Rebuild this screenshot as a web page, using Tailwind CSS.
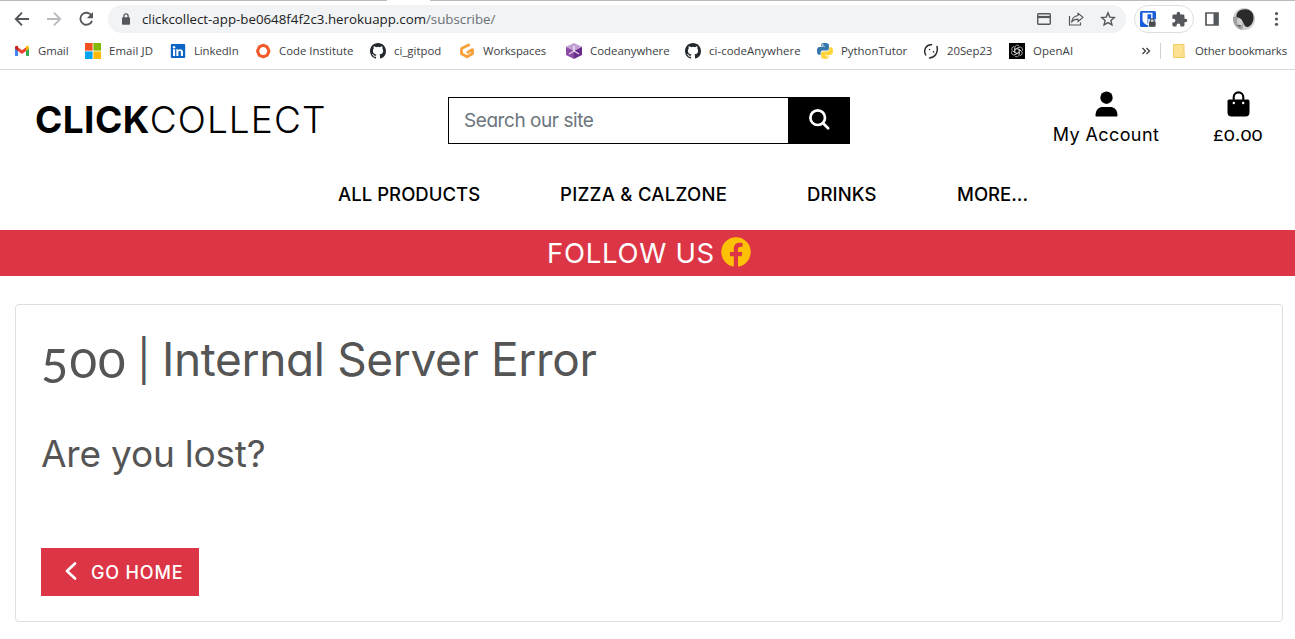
<!DOCTYPE html>
<html lang="en">
<head>
<meta charset="utf-8">
<title>ClickCollect</title>
<script src="https://cdn.jsdelivr.net/npm/@tailwindcss/browser@4"></script>
</head>
<body class="h-[639px] overflow-hidden bg-white font-['Inter',sans-serif] [font-feature-settings:'cv11'] text-black">

<!-- Browser toolbar -->
<div class="h-[70px] border-b border-[#d6d7d9] font-['Open_Sans',sans-serif]">
  <div class="flex h-px">
    <div class="w-[387px] bg-[#b9babc]"></div><div class="w-[43px]"></div><div class="flex-1 bg-[#b9babc]"></div>
  </div>
  <div class="mt-1 flex h-7 items-center">
    <svg class="ml-[14px] h-4 w-4" viewBox="0 0 16 16" fill="none" stroke="#54585c" stroke-width="1.9"><path d="M15 8H2M8 1.7 1.8 8 8 14.3"/></svg>
    <svg class="ml-4 h-4 w-4" viewBox="0 0 16 16" fill="none" stroke="#b9bbbe" stroke-width="1.9"><path d="M1 8h13M8 1.7 14.2 8 8 14.3"/></svg>
    <svg class="ml-4 h-4 w-4" viewBox="0 0 16 16"><path d="M13.6 4.8A6 6 0 1 0 14 9.8" fill="none" stroke="#54585c" stroke-width="1.9"/><path d="M15 1v6.2H8.8z" fill="#54585c"/></svg>
    <div class="ml-[14px] flex h-7 w-[1018px] items-center rounded-full bg-[#f1f3f4]">
      <svg class="ml-[13px] h-3 w-[10px]" viewBox="0 0 10 12"><rect x="1" y="4.3" width="8" height="7.4" rx="1" fill="#54585c"/><path d="M2.9 5V3a2.1 2.1 0 0 1 4.2 0v2" fill="none" stroke="#54585c" stroke-width="1.3"/></svg>
      <span class="mt-px ml-[11px] w-[895px] text-[13.3px] whitespace-nowrap text-[#202124]">clickcollect-app-be0648f4f2c3.herokuapp.com<span class="text-[#6b6f74]">/subscribe/</span></span>
      <svg class="h-[14px] w-[14px]" viewBox="0 0 14 14" fill="none" stroke="#54585c" stroke-width="1.4"><rect x=".7" y="1.7" width="12.6" height="10.6" rx="1"/><path d="M.7 5h12.6" stroke-width="2.2"/></svg>
      <svg class="ml-[17px] h-4 w-4" viewBox="0 0 16 16" fill="none" stroke="#54585c" stroke-width="1.2" stroke-linejoin="round"><path d="M1.5 5v9h11v-2.500"/><path d="M10 2.2 15 6.400l-5 4.100V8.200C7 8.200 5 9.200 3.600 11.200 4 8 6 5 10 4.500z"/></svg>
      <svg class="ml-4 h-4 w-4" viewBox="0 0 16 16" fill="none" stroke="#54585c" stroke-width="1.4" stroke-linejoin="miter"><path d="m8 1.900 1.800 4.200 4.500.4-3.400 3 1 4.400L8 11.600l-3.900 2.300 1-4.400-3.400-3 4.500-.4z"/></svg>
    </div>
    <div class="ml-2 flex h-7 w-[60px] items-center rounded-full border border-[#dcdee1]">
      <svg class="ml-[5px] h-4 w-4" viewBox="0 0 16 16"><rect width="16" height="16" rx="1.500" fill="#175ddc"/><path d="M2.500 1.800h10v6.700c0 3-2.500 4.500-5 5.700-2.500-1.200-5-2.700-5-5.700z" fill="#fff"/><path d="M7.500 3.200h3.700v5.300c0 2-1.700 3.200-3.700 4.300z" fill="#175ddc"/><path d="M8 8h8v8H8z" fill="#fff" opacity=".75"/><rect x="9" y="10.700" width="6.500" height="5" rx=".8" fill="#4b4b4b"/><path d="M10.500 11V9.700a1.800 1.800 0 0 1 3.600 0V11" fill="none" stroke="#4b4b4b" stroke-width="1.200"/></svg>
      <svg class="ml-[15px] h-[17px] w-[17px]" viewBox="0 0 24 24" fill="#54585c"><path d="M20.500 11H19V7a2 2 0 0 0-2-2h-4V3.500a2.500 2.500 0 0 0-5 0V5H4a2 2 0 0 0-2 2v3.800h1.500a2.700 2.700 0 0 1 0 5.400H2V20a2 2 0 0 0 2 2h3.800v-1.500a2.700 2.700 0 0 1 5.400 0V22H17a2 2 0 0 0 2-2v-4h1.500a2.500 2.500 0 0 0 0-5z"/></svg>
    </div>
    <svg class="ml-[11px] h-[14px] w-[14px]" viewBox="0 0 14 14"><path d="M1 1h12v12H1z" fill="none" stroke="#54585c" stroke-width="1.700"/><path d="M8.500 1H13v12H8.500z" fill="#54585c"/></svg>
    <svg class="ml-[14px] h-[22px] w-[22px]" viewBox="0 0 22 22"><defs><clipPath id="av"><circle cx="11" cy="11" r="11"/></clipPath></defs><g clip-path="url(#av)"><path fill="#d0d0d0" d="M0 0h22v22H0z"/><path fill="#a0a0a0" d="M0 9 6 8l5 6-2 8H0z"/><path fill="#cfcfcf" d="M4 11c3-2 6-1 6.500 3l-2 4-4-2z"/><path fill="#2a2a2a" d="M3.500 9C3 4 7 1 12.500 1.200c5.500.3 8.500 4 8 9.300-.5 4.500-3 8-6 8.500-3 .2-3-3-5-5.500-.5-2.500-3-4-6-4.500z"/><path fill="#555" d="M4 17h4l-1 2z"/></g></svg>
    <svg class="ml-[19px] h-4 w-4" viewBox="0 0 16 16" fill="#54585c"><circle cx="2.500" cy="2.600" r="1.600"/><circle cx="2.500" cy="8" r="1.600"/><circle cx="2.500" cy="13.300" r="1.600"/></svg>
  </div>

  <!-- Bookmarks -->
  <div class="flex h-9 items-center pl-[14px] text-[11.4px] whitespace-nowrap text-[#3c4043]">
    <div class="flex w-[71px] shrink-0 items-center gap-2"><svg class="h-4 w-4" viewBox="0 0 16 16"><path fill="#4285f4" d="M1 4v9h3V7z"/><path fill="#34a853" d="M12 7v6h3V4z"/><path fill="#ea4335" d="M4 4.200 8 7.300l4-3.100v3.900l-4 3-4-3z"/><path fill="#c5221f" d="M1 4.300C1 2.600 2.900 2.300 4 3.200v4.900L1 5.800z"/><path fill="#fbbc04" d="M15 4.300c0-1.700-1.900-2-3-1.100v4.900l3-2.300z"/></svg><span class="tracking-[-0.1px]">Gmail</span></div>
    <div class="flex w-[85px] shrink-0 items-center gap-2"><svg class="h-4 w-4" viewBox="0 0 16 16"><path fill="#f25022" d="M0 0h7.600v7.600H0z"/><path fill="#7fba00" d="M8.400 0H16v7.600H8.400z"/><path fill="#00a4ef" d="M0 8.400h7.600V16H0z"/><path fill="#ffb900" d="M8.400 8.400H16V16H8.400z"/></svg><span class="tracking-[0.1px]">Email JD</span></div>
    <div class="flex w-[85px] shrink-0 items-center gap-2"><svg class="h-4 w-4" viewBox="0 0 16 16"><rect x=".8" y="1" width="14.400" height="14" rx="1" fill="#0a66c2"/><path fill="#fff" d="M3 6.300h2.100V13H3zM6.300 6.300h2v.9c1-1.600 4.700-1.500 4.700 1.800v4h-2.100V9.500c0-2-2.500-1.800-2.500 0V13H6.300z"/><circle cx="4.050" cy="4.200" r="1.200" fill="#fff"/></svg><span class="tracking-[-0.1px]">LinkedIn</span></div>
    <div class="flex w-[115px] shrink-0 items-center gap-2"><svg class="h-4 w-4" viewBox="0 0 16 16"><path fill="none" stroke="#f15a29" stroke-width="3" d="m8.200 2.200 3.900 1.600 1.900 4.400-1.700 4-3.900 1.700-4.100-1.500L2.500 8.200l1.800-4.300z" stroke-linejoin="round"/></svg><span>Code Institute</span></div>
    <div class="flex w-[89px] shrink-0 items-center gap-2"><svg class="h-4 w-4" viewBox="0 0 16 16" fill="#24292f"><path d="M8 0C3.580 0 0 3.580 0 8c0 3.540 2.290 6.530 5.470 7.590.4.070.55-.17.55-.38 0-.19-.010-.82-.010-1.490-2.010.37-2.530-.49-2.690-.94-.090-.23-.48-.94-.82-1.130-.28-.15-.68-.52-.010-.53.630-.010 1.080.580 1.230.820.720 1.210 1.870.870 2.330.660.070-.520.280-.870.510-1.070-1.780-.200-3.640-.890-3.640-3.950 0-.870.310-1.590.820-2.150-.080-.200-.360-1.020.080-2.120 0 0 .670-.210 2.200.820a7.600 7.600 0 0 1 4 0c1.530-1.040 2.200-.820 2.200-.820.440 1.100.160 1.920.080 2.120.510.560.820 1.270.820 2.150 0 3.070-1.870 3.750-3.650 3.950.290.250.540.730.540 1.480 0 1.070-.010 1.930-.010 2.200 0 .210.150.460.550.380A8 8 0 0 0 16 8c0-4.420-3.580-8-8-8z"/></svg><span>ci_gitpod</span></div>
    <div class="flex w-[107px] shrink-0 items-center gap-2"><svg class="h-4 w-4" viewBox="0 0 16 16" fill="none" stroke="#f9a03a" stroke-width="2.800" stroke-linejoin="round" stroke-linecap="round"><path d="M9.800 2 3 5.300a1 1 0 0 0-.5.900v4.600l5.500 3 5.500-3V6.600L8.800 9.200"/></svg><span class="tracking-[-0.1px]">Workspaces</span></div>
    <div class="flex w-[119px] shrink-0 items-center gap-2"><svg class="h-4 w-4" viewBox="0 0 16 16"><path fill="#c3a0d4" d="m8 0 8 3.800L8 8 0 3.800z"/><path fill="#8a4ba5" d="M0 3.800 8 8v8l-8-4z"/><path fill="#6a2c8c" d="M16 3.800 8 8v8l8-4z"/><path stroke="#fff" stroke-width="1.300" opacity=".8" d="M8 3v6M8 8 3 11M8 8l5 3"/></svg><span>Codeanywhere</span></div>
    <div class="flex w-[132px] shrink-0 items-center gap-2"><svg class="h-4 w-4" viewBox="0 0 16 16" fill="#24292f"><path d="M8 0C3.580 0 0 3.580 0 8c0 3.540 2.290 6.530 5.470 7.590.4.070.55-.17.55-.38 0-.19-.010-.82-.010-1.490-2.010.37-2.530-.49-2.690-.94-.090-.23-.48-.94-.82-1.130-.28-.15-.68-.52-.010-.53.630-.010 1.080.580 1.230.820.720 1.210 1.870.870 2.330.660.070-.520.280-.870.510-1.070-1.780-.200-3.640-.890-3.640-3.950 0-.870.310-1.590.820-2.150-.080-.200-.360-1.020.080-2.120 0 0 .670-.210 2.200.820a7.600 7.600 0 0 1 4 0c1.530-1.040 2.200-.820 2.200-.820.440 1.100.160 1.920.080 2.120.510.560.820 1.270.820 2.150 0 3.070-1.870 3.750-3.650 3.950.290.250.540.730.540 1.480 0 1.070-.010 1.930-.010 2.200 0 .210.150.460.550.380A8 8 0 0 0 16 8c0-4.420-3.580-8-8-8z"/></svg><span class="tracking-[0.05px]">ci-codeAnywhere</span></div>
    <div class="flex w-[106px] shrink-0 items-center gap-2"><svg class="h-4 w-4" viewBox="0 0 16 16"><path fill="#3776ab" d="M7.900 0C4 0 4.200 1.700 4.200 1.700v1.900H8v.5H2.700S0 3.800 0 7.900s2.300 3.900 2.300 3.900h1.400V9.900s0-2.300 2.300-2.300h3.800s2.100 0 2.100-2.100V2.200S12.200 0 7.900 0z"/><path fill="#ffd43b" d="M8.100 16c3.900 0 3.700-1.700 3.700-1.700v-1.900H8v-.5h5.300s2.700.3 2.700-3.800-2.300-3.900-2.300-3.900h-1.400v1.900s0 2.300-2.300 2.300H6.200s-2.100 0-2.100 2.100v3.300S3.800 16 8.100 16z"/><circle cx="5.800" cy="2" r=".8" fill="#fff"/><circle cx="10.200" cy="14" r=".8" fill="#fff"/></svg><span>PythonTutor</span></div>
    <div class="flex w-[86px] shrink-0 items-center gap-2"><svg class="h-4 w-4" viewBox="0 0 16 16" fill="none" stroke="#2b2b2b" stroke-width="1.500" stroke-linecap="round"><path d="M2.700 12C-.2 6.500 3.800 1.200 8.500 1.700M14 3.500c1.300 5.500-1.500 10.800-7.500 11.500"/><path d="M6.500 6.500v.1M10.500 8.800v.1" stroke-width="1.500"/></svg><span class="tracking-[-0.05px]">20Sep23</span></div>
    <div class="flex w-[132px] shrink-0 items-center gap-2"><svg class="h-4 w-4" viewBox="0 0 16 16"><path d="M0 0h16v16H0z"/><g fill="none" stroke="#d8d8d8" stroke-width=".7"><path id="petal" d="M5.800 9.200V4.500a2.500 2.500 0 0 1 4.600-1.200M5.800 6.700l4-2.300"/><use href="#petal" transform="rotate(60 8 8)"/><use href="#petal" transform="rotate(120 8 8)"/><use href="#petal" transform="rotate(180 8 8)"/><use href="#petal" transform="rotate(240 8 8)"/><use href="#petal" transform="rotate(300 8 8)"/></g></svg><span class="tracking-[0.1px]">OpenAI</span></div>
    <svg class="h-2 w-[10px]" viewBox="0 0 10 8" fill="none" stroke="#3c4043" stroke-width="1.300"><path d="m1.500 1 3 3-3 3M5.500 1l3 3-3 3"/></svg>
    <div class="ml-[9px] h-4 w-px bg-[#cfd1d4]"></div>
    <svg class="ml-3 h-[14px] w-3 shrink-0" viewBox="0 0 12 14"><path d="M.5.500h10.500v10.500l.5 2.500H.500z" fill="#fde293" stroke="#f3cd60"/><path d="M9 13.500V10l2-1.500v5z" fill="#fff0b8" stroke="#f3cd60" stroke-width=".8"/></svg>
    <span class="ml-[10px] tracking-[-0.1px]">Other bookmarks</span>
  </div>
</div>

<!-- Site header -->
<header class="flex h-[100px] items-center pl-[35px]">
  <a class="mb-px w-[413px] text-[37px] leading-none whitespace-nowrap"><span class="font-bold tracking-[0.4px]">CLICK</span><span class="font-light tracking-[1.1px]">COLLECT</span></a>
  <form class="flex h-[47px] w-[402px] border border-black">
    <div class="flex flex-1 items-center pt-[2px] pl-[15px] text-[19px] tracking-[-0.44px] text-[#6c757d]">Search our site</div>
    <div class="flex w-[61px] items-center justify-center bg-black"><svg class="h-[22px] w-[22px]" viewBox="0 0 22 22" fill="none" stroke="#fff" stroke-width="2.700" stroke-linecap="round"><circle cx="9.700" cy="8.700" r="7.300"/><path d="m15.100 14.200 5 5"/></svg></div>
  </form>
  <div class="mb-[5px] ml-[196px] flex w-[120px] flex-col items-center">
    <svg class="h-[26px] w-[23px]" viewBox="0 0 23 26"><circle cx="11.500" cy="6.700" r="6.200"/><path d="M.5 24.500C.5 18.500 4 16 8 16h7c4 0 7.500 2.500 7.500 8.500 0 .6-.4 1-1 1h-20c-.6 0-1-.4-1-1z"/></svg>
    <span class="mt-2 text-[18px] leading-5 tracking-[0.4px] whitespace-nowrap">My Account</span>
  </div>
  <div class="mb-[5px] ml-[32px] flex w-20 flex-col items-center">
    <svg class="h-[26px] w-[23px]" viewBox="0 0 23 26"><path d="M.5 10a1.500 1.500 0 0 1 1.500-1.500h19a1.500 1.500 0 0 1 1.500 1.500v11.500a4 4 0 0 1-4 4h-14a4 4 0 0 1-4-4z"/><path d="M6.700 12V6.200a4.800 4.800 0 0 1 9.600 0V12" fill="none" stroke="#000" stroke-width="2.100"/><circle cx="6.800" cy="12" r="1.200" fill="#fff"/><circle cx="16.200" cy="12" r="1.200" fill="#fff"/></svg>
    <span class="mt-[7px] mb-px font-['Lato',sans-serif] text-[19.5px] leading-5 tracking-[0.7px] oldstyle-nums">£0.00</span>
  </div>
</header>

<nav class="flex h-[60px] items-start gap-20 pt-3 pl-[338px] text-[18.5px] leading-[25px] font-medium whitespace-nowrap">
  <a class="w-[142px] tracking-[0.05px]">ALL PRODUCTS</a>
  <a class="w-[167px] tracking-[0.28px]">PIZZA &amp; CALZONE</a>
  <a class="w-[70px] tracking-[0.1px]">DRINKS</a>
  <a>MORE...</a>
</nav>

<div class="flex h-[46px] items-center justify-center gap-[6px] bg-[#dc3545] pl-[3px] text-[27.5px] text-white">
  <span class="mt-[2px] tracking-[0.7px]">FOLLOW US</span>
  <svg class="mb-[3px] h-[30px] w-[30px]" viewBox="0 0 30 30"><circle cx="15" cy="15" r="14.700" fill="#ffc107"/><path d="M12.800 30V19.300H9v-4.200h3.800v-3.300c0-3.900 2.200-6 5.700-6 1.100 0 2.200.1 3.100.3v3.600h-2c-2 0-2.600 1.200-2.600 2.500v2.900h4.300l-.7 4.200H17V30z" fill="#dc3545"/></svg>
</div>

<main class="mt-7 ml-[15px] flex h-[318px] w-[1268px] flex-col items-start rounded border border-[#dfdfdf] pl-[25px] text-[#555]">
  <h1 class="mt-[25px] flex h-[58px] items-center text-[46px] leading-none whitespace-nowrap"><span class="mb-px w-[90px] font-['Lato',sans-serif] text-[51px] tracking-[1px] oldstyle-nums">500</span><span class="mt-[2px] w-[31px] pl-[6px] text-[41px]">|</span><span class="tracking-[-0.36px]">Internal Server Error</span></h1>
  <h2 class="mt-9 flex h-[58px] items-center text-[37px] leading-none tracking-[-0.2px]">Are you lost?</h2>
  <a class="mt-[66px] flex h-12 w-[158px] shrink-0 items-center bg-[#dc3545] pl-6 text-[18px] font-medium tracking-[0.85px] text-white">
    <svg class="mb-[2px] h-[18px] w-3" viewBox="0 0 12 18" fill="none" stroke="#fff" stroke-width="2.700" stroke-linecap="round" stroke-linejoin="round"><path d="M10 1.500 2 9l8 7.500"/></svg>
    <span class="ml-[14px] whitespace-nowrap">GO HOME</span>
  </a>
</main>
</body>
</html>
